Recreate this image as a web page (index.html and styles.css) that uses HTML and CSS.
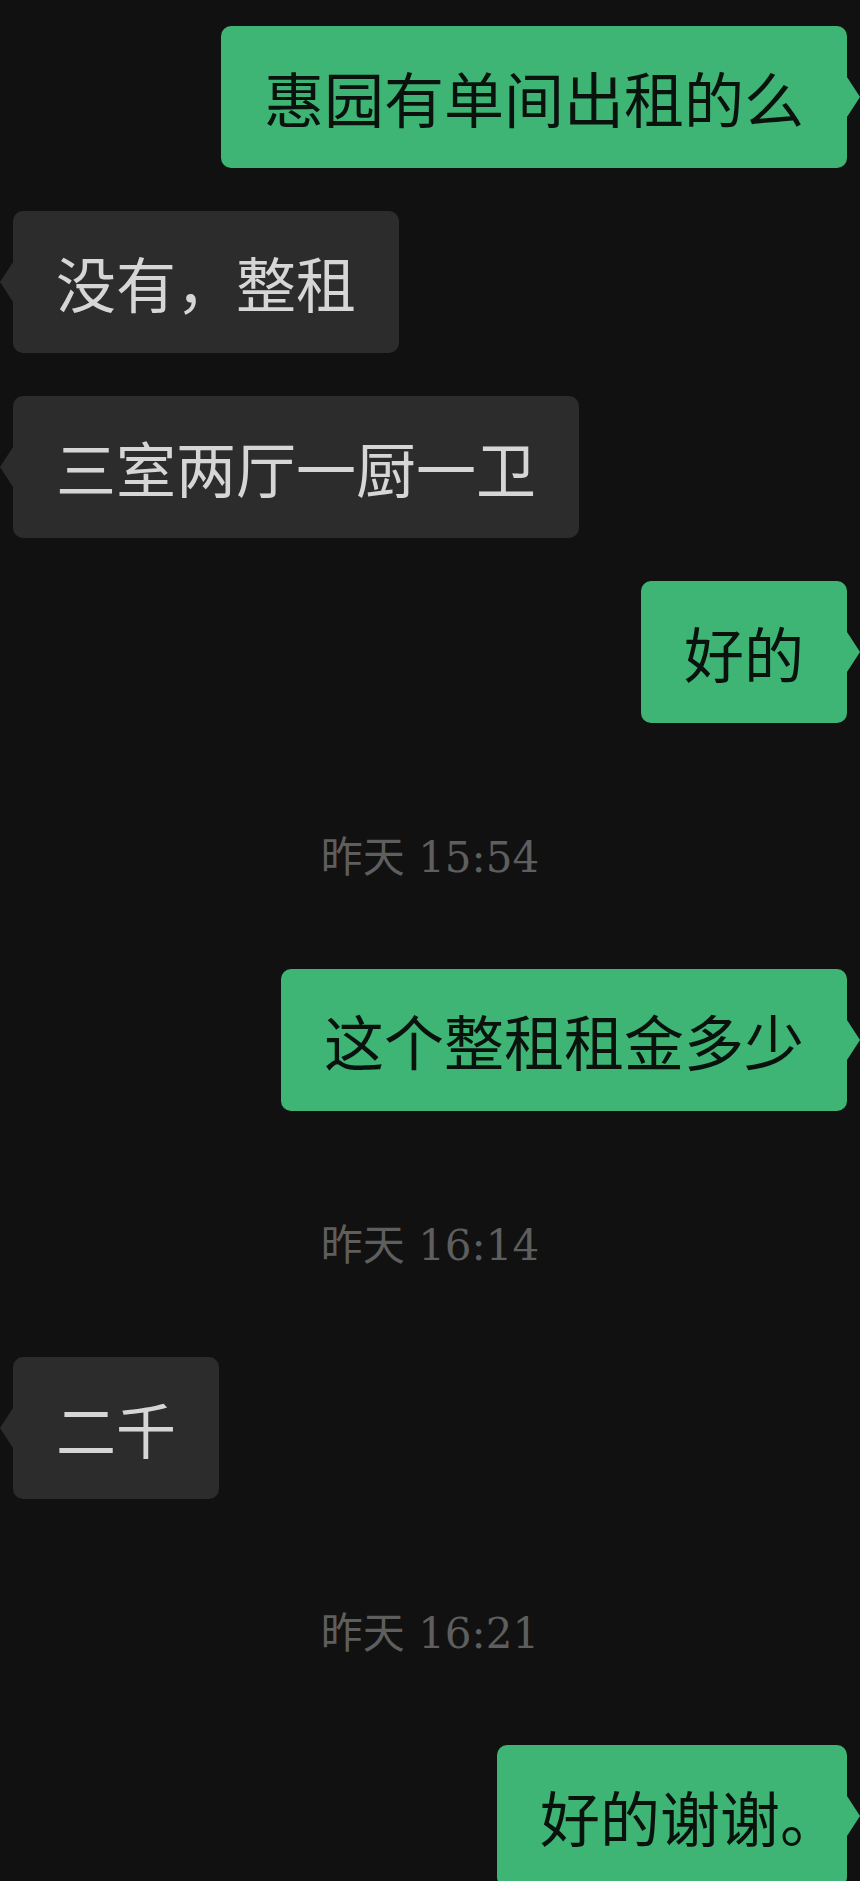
FILE: index.html
```html
<!DOCTYPE html>
<html lang="zh-CN">
<head>
    <meta charset="UTF-8">
    <title>聊天记录</title>
    <link rel="stylesheet" href="styles.css">
</head>
<body>
    <div class="chat">
        <div class="row mine"><div class="bubble">惠园有单间出租的么</div></div>
        <div class="row theirs"><div class="bubble">没有，整租</div></div>
        <div class="row theirs"><div class="bubble">三室两厅一厨一卫</div></div>
        <div class="row mine"><div class="bubble">好的</div></div>

        <div class="time">昨天 15:54</div>
        <div class="row mine"><div class="bubble">这个整租租金多少</div></div>

        <div class="time">昨天 16:14</div>
        <div class="row theirs"><div class="bubble">二千</div></div>

        <div class="time">昨天 16:21</div>
        <div class="row mine"><div class="bubble">好的谢谢<span class="punct">。</span></div></div>
    </div>
</body>
</html>
```

FILE: styles.css
```css
html, body {
    margin: 0;
    padding: 0;
}

body {
    background-color: #111111;
    height: 100vh;
    overflow: hidden;
    font-family: "Noto Sans CJK SC", "Noto Sans", sans-serif;
}

.chat {
    display: flex;
    flex-direction: column;
    gap: 43px;
    padding: 26px 13px 0;
}

.row {
    display: flex;
}

.row.mine {
    justify-content: flex-end;
}

.row.theirs {
    justify-content: flex-start;
}

.bubble {
    position: relative;
    font-size: 60px;
    line-height: 82px;
    padding: 30px 43px;
    border-radius: 10px;
    white-space: nowrap;
}

.mine .bubble {
    background-color: #3eb575;
    color: #0a120d;
}

.theirs .bubble {
    background-color: #2c2c2c;
    color: #d6d6d6;
}

/* 气泡小尖角 */
.bubble::after {
    content: "";
    position: absolute;
    top: 50%;
    margin-top: -20px;
    border-top: 20px solid transparent;
    border-bottom: 20px solid transparent;
}

.mine .bubble::after {
    right: -13px;
    border-left: 13px solid #3eb575;
}

.theirs .bubble::after {
    left: -13px;
    border-right: 13px solid #2c2c2c;
}

.punct {
    font-feature-settings: "halt";
    margin-right: -6px;
}

.time {
    text-align: center;
    font-family: "DejaVu Serif", "Noto Sans CJK SC", serif;
    font-size: 42px;
    line-height: 48px;
    color: #5e5e5e;
    margin: 68px 0 44px;
}
```
